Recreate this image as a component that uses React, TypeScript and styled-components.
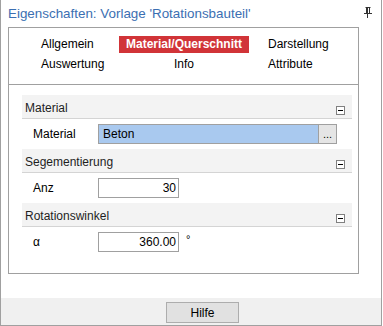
import styled, { createGlobalStyle } from 'styled-components';

const GlobalStyle = createGlobalStyle`
  body {
    margin: 0;
    background: #ffffff;
    font-family: 'Liberation Sans', Arial, sans-serif;
    font-size: 12px;
    color: #000000;
  }
`;

const tabs = [
  { label: 'Allgemein', active: false, center: false },
  { label: 'Material/Querschnitt', active: true, center: true },
  { label: 'Darstellung', active: false, center: false },
  { label: 'Auswertung', active: false, center: false },
  { label: 'Info', active: false, center: true },
  { label: 'Attribute', active: false, center: false },
];

const PinIcon = () => (
  <svg width="8" height="11" viewBox="0 0 8 11">
    <path d="M1.5 0.5h5M2.5 0.5v6M5.5 0.5v6M3.5 0.5v6" stroke="#333" fill="none" />
    <path d="M0 6.5h8" stroke="#333" />
    <path d="M3.5 7v4" stroke="#333" />
  </svg>
);

const CollapseBox = () => (
  <Collapse>
    <CollapseDash />
  </Collapse>
);

const App = () => {
  return (
    <>
      <GlobalStyle />
      <Window>
        <TitleBar>
          <Title>Eigenschaften: Vorlage 'Rotationsbauteil'</Title>
          <PinIcon />
        </TitleBar>

        <Body>
          <Panel>
            <TabHeader>
              {tabs.map((tab) => (
                <Tab key={tab.label} $active={tab.active} $center={tab.center}>
                  {tab.label}
                </Tab>
              ))}
            </TabHeader>

            <PropGrid>
              <Category>
                <CategoryTitle>Material</CategoryTitle>
                <CollapseBox />
              </Category>
              <Row>
                <Label>Material</Label>
                <Picker>
                  <PickerValue>Beton</PickerValue>
                  <PickerButton>...</PickerButton>
                </Picker>
              </Row>

              <Category>
                <CategoryTitle>Segementierung</CategoryTitle>
                <CollapseBox />
              </Category>
              <Row>
                <Label>Anz</Label>
                <NumberBox>30</NumberBox>
              </Row>

              <Category>
                <CategoryTitle>Rotationswinkel</CategoryTitle>
                <CollapseBox />
              </Category>
              <Row>
                <Label>α</Label>
                <NumberBox>360.00</NumberBox>
                <Unit>°</Unit>
              </Row>
            </PropGrid>
          </Panel>
        </Body>

        <Footer>
          <HelpButton>Hilfe</HelpButton>
        </Footer>
      </Window>
    </>
  );
};

const Window = styled.div`
  width: 382px;
  height: 326px;
  box-sizing: border-box;
  border: 1px solid #a0a0a0;
  border-top: none;
  display: flex;
  flex-direction: column;
  background: #ffffff;
`;

const TitleBar = styled.div`
  height: 27px;
  display: flex;
  align-items: center;
  justify-content: space-between;
  padding: 0 9px 1px 7px;
  box-sizing: border-box;

  svg {
    margin-bottom: 1px;
  }
`;

const Title = styled.div`
  font-size: 13.4px;
  color: #3b6fb2;
  white-space: nowrap;
`;

const Body = styled.div`
  flex: 1;
  padding-left: 7px;
`;

const Panel = styled.div`
  width: 351px;
  height: 247px;
  box-sizing: border-box;
  border: 1px solid #a0a0a0;
`;

const TabHeader = styled.div`
  height: 57px;
  box-sizing: border-box;
  padding: 8px 0 0 26px;
  border-bottom: 1px solid #a0a0a0;
  display: grid;
  grid-template-columns: 84px 143px 1fr;
  grid-auto-rows: 17px;
  row-gap: 3px;
  align-content: start;
`;

const Tab = styled.div<{ $active: boolean; $center: boolean }>`
  justify-self: start;
  height: 17px;
  line-height: 17px;
  padding: 0 6px;
  box-sizing: border-box;
  width: ${(p) => (p.$center ? '130px' : 'auto')};
  text-align: ${(p) => (p.$center ? 'center' : 'left')};
  font-weight: ${(p) => (p.$active ? 700 : 400)};
  color: ${(p) => (p.$active ? '#ffffff' : '#000000')};
  background: ${(p) => (p.$active ? '#d13438' : 'transparent')};
  white-space: nowrap;
`;

const PropGrid = styled.div`
  padding: 10px 6px 0 13px;
`;

const Category = styled.div`
  height: 24px;
  box-sizing: border-box;
  background: #f3f3f3;
  border-bottom: 1px solid #d4d4d4;
  display: flex;
  justify-content: space-between;
  align-items: flex-start;
  padding: 0 7px 0 3px;
  color: #1e1e1e;
`;

const CategoryTitle = styled.div`
  padding-top: 6px;
  line-height: 14px;
`;

const Collapse = styled.div`
  width: 9px;
  height: 9px;
  box-sizing: border-box;
  border: 1px solid #808080;
  background: #ffffff;
  display: flex;
  align-items: center;
  justify-content: center;
  align-self: flex-end;
  margin-bottom: 3px;
`;

const CollapseDash = styled.div`
  width: 5px;
  height: 1px;
  background: #000000;
`;

const Row = styled.div`
  height: 30px;
  display: flex;
  align-items: center;
  padding-left: 11px;
`;

const Label = styled.div`
  width: 65px;
  color: #000000;
`;

const Picker = styled.div`
  width: 239px;
  height: 20px;
  box-sizing: border-box;
  border: 1px solid #a0a0a0;
  display: flex;
`;

const PickerValue = styled.div`
  flex: 1;
  background: #a9c9ef;
  padding-left: 4px;
  line-height: 18px;
`;

const PickerButton = styled.div`
  width: 17px;
  border-left: 1px solid #a0a0a0;
  background: #e5e5e5;
  text-align: center;
  line-height: 18px;
  font-size: 11px;
`;

const NumberBox = styled.div`
  width: 81px;
  height: 20px;
  box-sizing: border-box;
  border: 1px solid #a0a0a0;
  text-align: right;
  padding-right: 2px;
  line-height: 18px;
  background: #ffffff;
`;

const Unit = styled.div`
  margin-left: 7px;
  margin-top: -6px;
  font-size: 11px;
`;

const Footer = styled.div`
  height: 27px;
  background: #f0f0f0;
  display: flex;
  align-items: center;
  padding-left: 165px;
`;

const HelpButton = styled.button`
  width: 73px;
  height: 21px;
  box-sizing: border-box;
  border: 1px solid #adadad;
  background: #e1e1e1;
  font-family: 'Liberation Sans', Arial, sans-serif;
  font-size: 12px;
  color: #000000;
  padding: 0;
  margin-top: 2px;
`;

export default App;
